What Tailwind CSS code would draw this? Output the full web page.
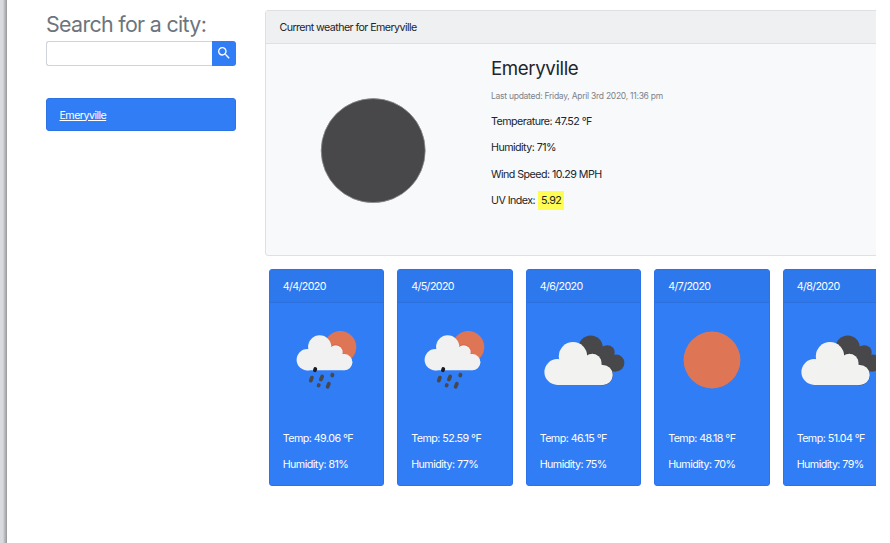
<!DOCTYPE html>
<html lang="en">
<head>
<meta charset="utf-8">
<title>Weather Dashboard</title>
<script src="https://cdn.jsdelivr.net/npm/@tailwindcss/browser@4"></script>
</head>
<body class="bg-white overflow-hidden">
<svg class="hidden">
  <defs>
    <symbol id="rain" viewBox="0 0 115 118">
      <circle cx="71.3" cy="44" r="16" fill="#de7555"/>
      <circle cx="66.7" cy="49" r="7" fill="#d6553f" stroke="#d6553f"/>
      <g fill="#f1f1f2"><circle cx="38.3" cy="56.7" r="10.7"/><circle cx="50.7" cy="43.9" r="11.6"/><circle cx="66.7" cy="49.2" r="7"/><circle cx="75.3" cy="59.2" r="8.1"/><path d="M38.3 67.3h37V52L62 44 40 48z"/></g>
      <g stroke="#48484a" stroke-width="3.8" stroke-linecap="round"><path d="M42.9 74.6l-1.100 3M53.2 73.4l-1.300 3M63.5 71.7l-.3.8M49.8 82.1l-.2.4M59.9 80.8l-1.300 3"/><path d="M46.3 66l-.4 1.3" stroke="#1c1c1e"/></g>
    </symbol>
    <symbol id="clouds" viewBox="0 0 115 118">
      <g fill="#48484a"><circle cx="64.7" cy="44.5" r="12.1"/><circle cx="81.3" cy="49.6" r="7.4"/><circle cx="90" cy="60" r="8.4"/><path d="M60 50L78 43l12 17v8.4H70z"/></g>
      <g fill="#f2f2f1" stroke="#2f2f31" stroke-width=".6"><circle cx="66.3" cy="60" r="9.3"/><circle cx="76.7" cy="72" r="9.9"/></g>
      <g fill="#f2f2f1"><circle cx="31.3" cy="69" r="12.9"/><circle cx="47" cy="53.2" r="14.2"/><circle cx="66.3" cy="60" r="9.2"/><circle cx="76.7" cy="71.9" r="10"/><path d="M31.3 81.9h45.4V62L60 55 32 58z"/></g>
    </symbol>
    <symbol id="sun" viewBox="0 0 115 118"><circle cx="58" cy="57" r="28.4" fill="#de7555"/></symbol>
  </defs>
</svg>
<div class="flex w-[876px] h-[543px] overflow-hidden font-['Inter','Liberation_Sans',sans-serif] text-[10.7px] leading-4 tracking-[-0.54px] text-[#212529]">
  <div class="w-[7px] shrink-0 bg-linear-to-r from-[#d9dade] from-40% to-[#96979c]"></div>
  <aside class="w-[190px] ml-[39px] shrink-0 pt-[11px]">
    <h2 class="text-[21.4px] leading-[26px] tracking-[-0.67px] text-[#6c757d] whitespace-nowrap">Search for a city:</h2>
    <form class="flex mt-[4px] h-[25px]">
      <input aria-label="City" class="flex-1 min-w-0 border border-r-0 border-[#ced4da] rounded-l-[3px] outline-none">
      <button type="button" aria-label="Search" class="w-[24.5px] bg-[#307df6] rounded-r-[3px] flex items-center justify-center">
        <svg class="w-[16px] h-[16px] -mt-px" viewBox="0 0 24 24" fill="#fff"><path d="M15.5 14h-.79l-.28-.27A6.471 6.471 0 0 0 16 9.5 6.5 6.5 0 1 0 9.500 16c1.610 0 3.090-.59 4.230-1.570l.27.28v.79l5 4.990L20.490 19l-4.990-5zm-6 0C7.010 14 5 11.990 5 9.500S7.010 5 9.500 5 14 7.010 14 9.500 11.990 14 9.500 14z"/></svg>
      </button>
    </form>
    <div class="mt-[32px] h-[33px] rounded-[3px] bg-[#307df6] border border-[#2c74e6] px-[12.5px] pt-[2px] flex items-center text-white"><a class="underline tracking-[-0.55px]">Emeryville</a></div>
  </aside>
  <main class="ml-[29px] w-[680px] shrink-0 pt-[10px]">
    <section class="h-[246px] border border-[#dfe0e2] rounded-[3px] bg-[#f8f9fb]">
      <header class="h-[33px] pl-[13.5px] pt-[2px] flex items-center bg-[#eff0f2] border-b border-[#dfe0e2] tracking-[-0.58px]">Current weather for Emeryville</header>
      <div class="flex">
        <svg class="w-[225px] h-[211px] shrink-0" viewBox="0 0 225 211"><circle cx="107.2" cy="106.6" r="52" fill="#48484a" stroke="#8b8b8d" stroke-width=".8"/></svg>
        <div class="pt-[13px]">
          <h3 class="text-[18.7px] leading-[24px] tracking-[-0.4px]">Emeryville</h3>
          <p class="mt-[7px] text-[8.5px] tracking-[-0.26px] text-[#7b838a]">Last updated: Friday, April 3rd 2020, 11:36 pm</p>
          <p class="mt-[10px]">Temperature: 47.52 °F</p>
          <p class="mt-[10px]">Humidity: 71%</p>
          <p class="mt-[11px]">Wind Speed: 10.29 MPH</p>
          <p class="mt-[8px] flex items-center h-[19px]">UV Index:<span class="ml-[3px] bg-[#fffd54] h-[19px] px-[3px] flex items-center">5.92</span></p>
        </div>
      </div>
    </section>
    <section class="flex gap-[13.1px] mt-[13px] ml-[3.7px] text-white" id="forecast"></section>
  </main>
</div>
<script>
const days = [
  ["4/4/2020", "rain", "49.06", 81],
  ["4/5/2020", "rain", "52.59", 77],
  ["4/6/2020", "clouds", "46.15", 75],
  ["4/7/2020", "sun", "48.18", 70],
  ["4/8/2020", "clouds", "51.04", 79]
];
document.getElementById("forecast").innerHTML = days.map(([date, icon, temp, hum]) => `
  <article class="w-[115.4px] h-[217px] shrink-0 rounded-[3px] bg-[#307df6] border border-[#2c74e6]">
    <header class="h-[33px] pl-[13px] pt-[2px] flex items-center bg-[#2e78ee] border-b border-[#2b70dd] tracking-[-0.6px]">${date}</header>
    <svg class="w-[115px] h-[118px] -ml-px"><use href="#${icon}"/></svg>
    <p class="pl-[13px] mt-[10px]">Temp: ${temp} °F</p>
    <p class="pl-[13px] mt-[10px]">Humidity: ${hum}%</p>
  </article>`).join("");
</script>
</body>
</html>
